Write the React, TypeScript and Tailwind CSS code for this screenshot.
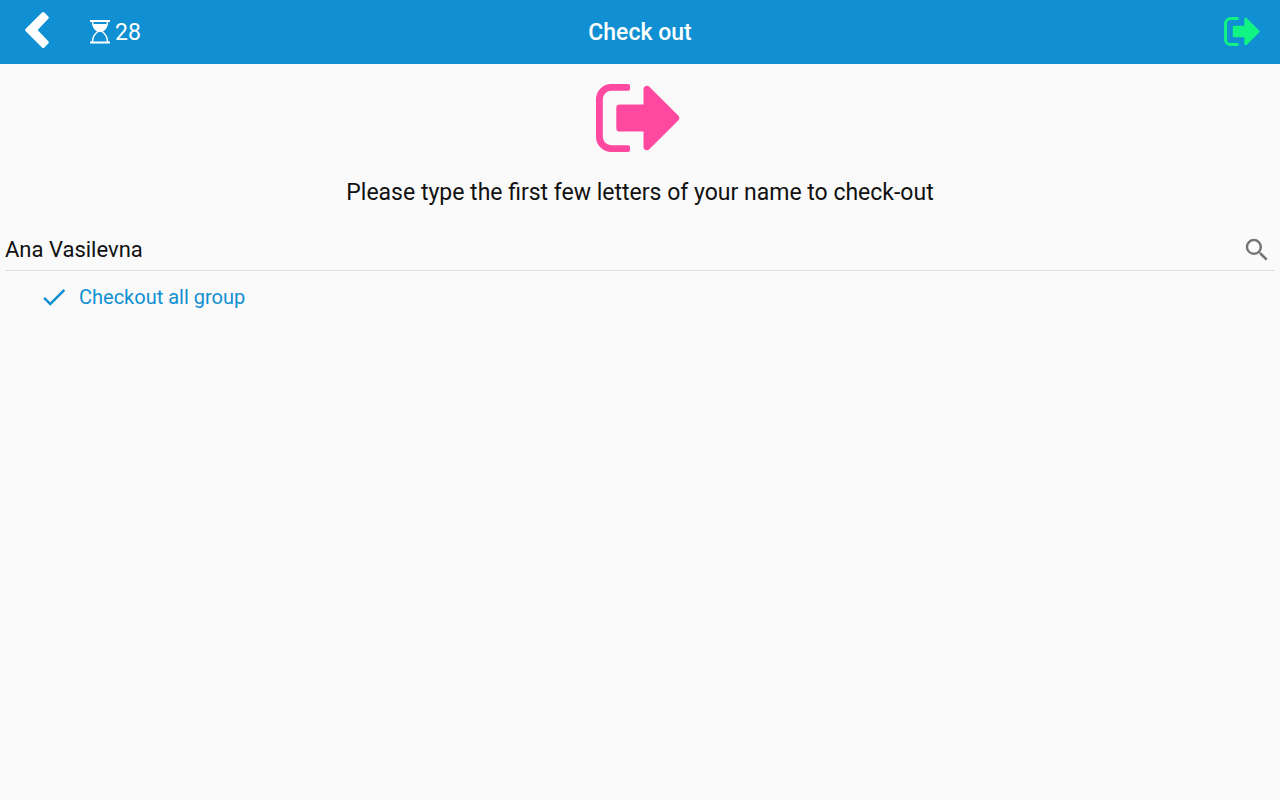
import { useState } from "react";

function SignOutIcon({ className }: { className: string }) {
  return (
    <svg viewBox="0 0 84 68" fill="currentColor" aria-hidden="true" className={className}>
      <path d="M15.3 0H32.3Q34 0 34 1.7V5.1Q34 6.8 32.3 6.8H15.3A8.5 8.5 0 0 0 6.8 15.3V52.7A8.5 8.5 0 0 0 15.3 61.2H32.3Q34 61.2 34 62.9V66.3Q34 68 32.3 68H15.3A15.3 15.3 0 0 1 0 52.7V15.3A15.3 15.3 0 0 1 15.3 0Z" />
      <path d="M23.7 20.4H47.5V5.1A3.4 3.4 0 0 1 53.3 2.7L82.2 31.6A3.4 3.4 0 0 1 82.2 36.4L53.3 65.3A3.4 3.4 0 0 1 47.5 62.9V47.6H23.7A3.4 3.4 0 0 1 20.3 44.2V23.8A3.4 3.4 0 0 1 23.7 20.4Z" />
    </svg>
  );
}

function ChevronIcon() {
  return (
    <svg viewBox="0 0 24 36" fill="currentColor" aria-hidden="true" className="h-9 w-6">
      <path d="M17 .6Q18.2 -.5 19.4 .6L23.3 4.5Q24.3 5.6 23.3 6.7L12.600 18L23.3 29.3Q24.3 30.4 23.3 31.5L19.4 35.4Q18.2 36.5 17 35.4L.7 19.2Q-.4 18 .7 16.8Z" />
    </svg>
  );
}

function HourglassIcon() {
  return (
    <svg viewBox="0 0 20 24" fill="none" stroke="currentColor" aria-hidden="true" className="h-6 w-5">
      <path d="M0 1H20M0 22.5H20" strokeWidth="1.8" />
      <path d="M2.5 1.5C2.5 7 5 9.5 8 11.5C5 13.5 2.5 17 2.5 22M17.5 1.5C17.5 7 15 9.5 12 11.5C15 13.5 17.5 17 17.5 22" strokeWidth="1.5" />
      <path d="M3 4H17C16.5 7.5 14.5 9.8 12 11.5C11 12.3 9 12.3 8 11.5C5.5 9.8 3.5 7.5 3 4Z" fill="currentColor" stroke="none" />
    </svg>
  );
}

export default function App() {
  const [name, setName] = useState("Ana Vasilevna");

  return (
    <div className="min-h-screen bg-[#fafafa] font-[Roboto,sans-serif] text-[#111111]">
      <header className="grid h-16 grid-cols-[1fr_auto_1fr] items-center bg-[#108fd2] px-5 text-white">
        <div className="flex items-center gap-[41px]">
          <button type="button" aria-label="Back" className="pb-1 pl-[5px]">
            <ChevronIcon />
          </button>
          <div className="flex items-center gap-[5px] text-[23px]">
            <HourglassIcon />
            <span className="pt-0.5">28</span>
          </div>
        </div>
        <h1 className="pt-0.5 text-[23px] font-medium">Check out</h1>
        <button type="button" aria-label="Check out" className="justify-self-end pb-0.5 text-[#12f481]">
          <SignOutIcon className="h-[29px] w-9" />
        </button>
      </header>

      <main className="px-[5px] pt-5">
        <div className="flex flex-col items-center">
          <SignOutIcon className="mr-1 h-[68px] w-[84px] text-[#ff48a0]" />
          <label htmlFor="guest-name" className="mt-[25px] text-[23px] leading-8">
            Please type the first few letters of your name to check-out
          </label>
        </div>
        <div className="mt-[21px] flex h-[41px] items-center border-b border-[#dddddd] pr-[3px]">
          <input
            id="guest-name"
            type="text"
            value={name}
            onChange={(event) => setName(event.target.value)}
            className="min-w-0 flex-1 bg-transparent text-[22px] leading-8 outline-none"
          />
          <button type="button" aria-label="Search" className="text-[#757575]">
            <svg viewBox="0 0 24 24" fill="currentColor" aria-hidden="true" className="size-[30px]">
              <path d="M15.5 14h-.79l-.28-.27A6.471 6.471 0 0 0 16 9.5 6.5 6.5 0 1 0 9.5 16c1.61 0 3.09-.59 4.23-1.57l.27.28v.79l5 4.99L20.49 19l-4.99-5zm-6 0C7.01 14 5 11.99 5 9.5S7.01 5 9.5 5 14 7.01 14 9.5 11.99 14 9.5 14z" />
            </svg>
          </button>
        </div>
        <button type="button" className="mt-[11px] ml-[34px] flex items-center gap-[10px] text-xl text-[#108fd2]">
          <svg viewBox="0 0 24 24" fill="currentColor" aria-hidden="true" className="size-[30px]">
            <path d="M9 16.17L4.83 12l-1.42 1.41L9 19 21 7l-1.41-1.41z" />
          </svg>
          Checkout all group
        </button>
      </main>
    </div>
  );
}
